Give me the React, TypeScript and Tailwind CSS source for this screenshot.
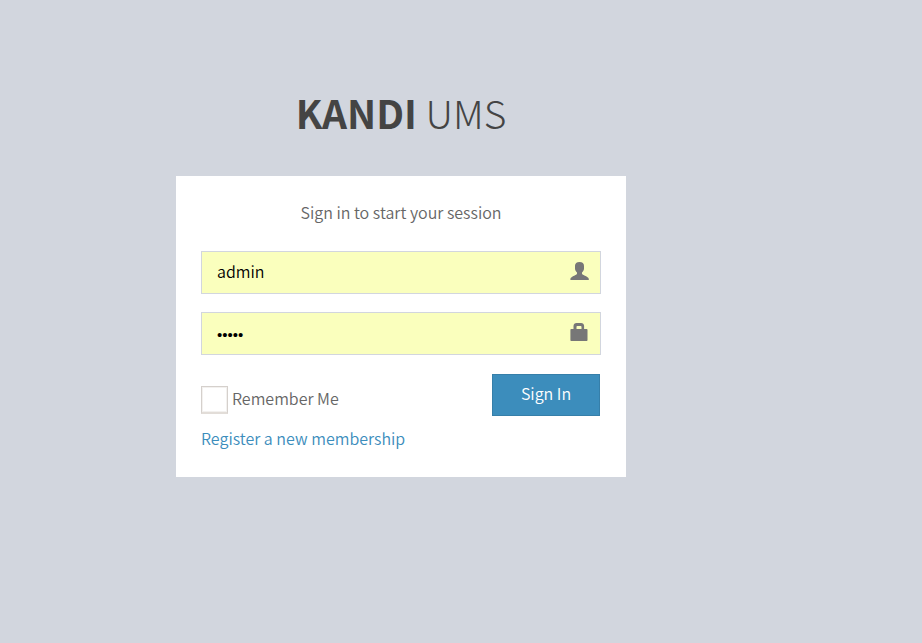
import { useState } from "react";
import type { FormEvent, ReactNode } from "react";

function UserIcon() {
  return (
    <svg viewBox="0 0 20 20" className="h-5 w-5 fill-[#777]" aria-hidden="true">
      <path d="M9.500 1C6.500 1 5 2.400 5 5v2.500c0 1.500.6 2.800 2 3.900v1.400c-.3.700-1.200 1.100-2.300 1.600C2.200 15.500.4 16.500.4 18v1h18.400v-1c0-1.500-1.900-2.500-4.400-3.600-1.100-.5-2.100-.9-2.400-1.600v-1.400c1.400-1.100 2-2.400 2-3.900V5c0-2.600-1.500-4-4.500-4z" />
    </svg>
  );
}

function LockIcon() {
  return (
    <svg viewBox="0 0 20 20" className="h-5 w-5 fill-[#777]" aria-hidden="true">
      <path
        fillRule="evenodd"
        d="M3.500 7V4C3.500 2.200 4.800 1 6.500 1h4.600c1.700 0 3 1.200 3 3v3h2.400c.6 0 1 .4 1 1v10c0 .6-.4 1-1 1H1.400c-.6 0-1-.4-1-1V8c0-.6.4-1 1-1zm3 0h5V4.700c0-.4-.3-.7-.7-.7H7.200c-.4 0-.7.300-.7.700z"
      />
    </svg>
  );
}

type FieldProps = {
  label: string;
  type: string;
  value: string;
  onChange: (value: string) => void;
  icon: ReactNode;
};

function Field({ label, type, value, onChange, icon }: FieldProps) {
  const face =
    type === "password" ? "font-['Liberation_Sans',sans-serif] text-[15px] pt-0.5" : "pb-1";
  return (
    <label className="relative block">
      <input
        type={type}
        aria-label={label}
        value={value}
        onChange={(e) => onChange(e.target.value)}
        className={`block h-[43px] w-full border border-[#d2d6de] bg-[#faffbd] pr-12 pl-[15px] text-black outline-none ${face}`}
      />
      <span className="pointer-events-none absolute inset-y-0 right-0 flex w-[43px] items-center justify-center pb-1">
        {icon}
      </span>
    </label>
  );
}

export default function App() {
  const [user, setUser] = useState("admin");
  const [password, setPassword] = useState("admin");
  const [remember, setRemember] = useState(false);

  return (
    <div className="min-h-screen bg-[#d2d6de] pt-[82px] pr-[120px] font-['Noto_Sans_CJK_SC','Noto_Sans',sans-serif] text-base leading-6 font-[350] text-[#666]">
      <main className="mx-auto max-w-[450px]">
        <h1 className="mb-[34px] text-center text-[39px] leading-[60px] font-[250] text-[#444]">
          <b className="font-bold">KANDI</b> UMS
        </h1>
        <form
          className="bg-white px-[25px] pt-6 pb-[27px]"
          onSubmit={(e: FormEvent) => e.preventDefault()}
        >
          <p className="mb-[27px] text-center">Sign in to start your session</p>
          <div className="flex flex-col gap-[18px]">
            <Field label="Username" type="text" value={user} onChange={setUser} icon={<UserIcon />} />
            <Field label="Password" type="password" value={password} onChange={setPassword} icon={<LockIcon />} />
          </div>
          <div className="mt-[19px] flex items-end justify-between pr-px">
            <label className="flex items-end gap-1">
              <input
                type="checkbox"
                checked={remember}
                onChange={(e) => setRemember(e.target.checked)}
                className="h-[28px] w-[27px] appearance-none border border-b-2 border-[#d5d0cc] border-b-[#e2ddd8] bg-white shadow-[inset_0_0_0_1px_#f3f1ef] checked:bg-[#3c8dbc]"
              />
              <span className="pb-1">Remember Me</span>
            </label>
            <button
              type="submit"
              className="mb-[-2px] h-[42px] w-[108px] border border-[#367fa9] bg-[#3c8dbc] pb-1 text-white"
            >
              Sign In
            </button>
          </div>
          <a href="#register" className="mt-3 block w-fit text-[#3c8dbc]">
            Register a new membership
          </a>
        </form>
      </main>
    </div>
  );
}
